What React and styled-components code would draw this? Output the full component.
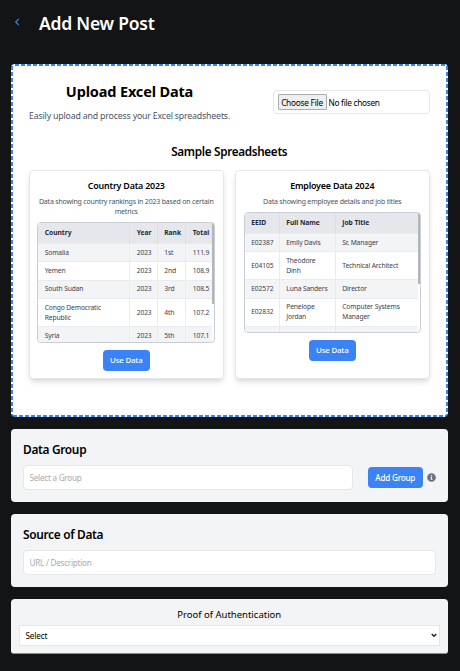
import React from "react";
import styled, { createGlobalStyle } from "styled-components";

const GlobalStyle = createGlobalStyle`
  *, *::before, *::after { box-sizing: border-box; }
  body { margin: 0; background: #131416; font-family: "Noto Sans", "Open Sans", sans-serif; color: #000; overflow: hidden; }
  h1, h2, h3, p { margin: 0; }
  button, input, select { font-family: inherit; margin: 0; }
`;

const Page = styled.main`
  height: 671px;
  padding: 0 12.5px 0 11px;
  background: #131416;
`;

const Header = styled.header`
  display: flex;
  align-items: center;
  height: 64px;
  padding: 0 0 18px 3px;
`;

const BackButton = styled.button`
  display: flex;
  width: 25px;
  height: 20px;
  padding: 5px 0 0;
  border: 0;
  background: none;
  color: #4384cf;
`;

const PageTitle = styled.h1`
  font-size: 17.5px;
  line-height: 24px;
  font-weight: 600;
  letter-spacing: -0.23px;
  color: #fff;
  white-space: nowrap;
`;

const dash = "#3b82f6 0 4px, #fff 4px 6px";

const UploadPanel = styled.section`
  height: 353px;
  border-radius: 4px;
  background:
    repeating-linear-gradient(90deg, ${dash}) 4px 0 / 100% 2px no-repeat,
    repeating-linear-gradient(90deg, ${dash}) 2px 100% / 100% 2px no-repeat,
    repeating-linear-gradient(180deg, ${dash}) 0 2px / 2px 100% no-repeat,
    repeating-linear-gradient(180deg, ${dash}) 100% 2px / 2px 100% no-repeat,
    #fff;
  padding: 17px 18px 0;
`;

const UploadTop = styled.div`
  display: flex;
  justify-content: space-between;
  height: 61px;
`;

const Intro = styled.div`
  width: 201px;
  text-align: center;
  white-space: nowrap;
`;

const UploadTitle = styled.h2`
  font-size: 14.5px;
  line-height: 20px;
  font-weight: 700;
  letter-spacing: -0.15px;
`;

const UploadText = styled.p`
  margin-top: 8px;
  font-size: 8.8px;
  line-height: 14px;
  letter-spacing: -0.19px;
  color: #4b5563;
`;

const FileField = styled.div`
  display: flex;
  align-items: center;
  width: 157px;
  height: 24px;
  margin-top: 9px;
  padding-left: 4px;
  border: 1px solid #e5e7eb;
  border-radius: 4px;
  font-size: 8.3px;
  letter-spacing: -0.3px;
  white-space: nowrap;
`;

const FileButton = styled.button`
  width: 49px;
  height: 16px;
  margin-right: 2px;
  padding: 0;
  border: 1px solid #a9adac;
  border-radius: 1px;
  background: #efefef;
  font-size: 8.3px;
  line-height: 13px;
  letter-spacing: -0.25px;
  color: #000;
`;

const SampleTitle = styled.h3`
  font-size: 11.7px;
  line-height: 18px;
  font-weight: 600;
  letter-spacing: -0.31px;
  text-align: center;
`;

const Cards = styled.div`
  display: grid;
  grid-template-columns: minmax(0, 1fr) minmax(0, 1fr);
  gap: 11.5px;
  height: 209px;
  margin-top: 10px;
`;

const Card = styled.article`
  display: flex;
  flex-direction: column;
  align-items: center;
  padding: 8px 7px 0;
  border: 1px solid #e5e7eb;
  border-radius: 4px;
  background: #fff;
  box-shadow: 0 4px 6px -1px rgba(0, 0, 0, 0.12), 0 2px 4px -2px rgba(0, 0, 0, 0.1);
`;

const CardTitle = styled.h3`
  font-size: 8.9px;
  line-height: 13px;
  font-weight: 600;
  letter-spacing: -0.19px;
`;

const CardText = styled.p`
  margin: 5px 0;
  font-size: 7px;
  line-height: 10px;
  letter-spacing: -0.19px;
  color: #4b5563;
  text-align: center;
`;

const TableFrame = styled.div`
  display: flex;
  align-items: flex-start;
  flex: none;
  width: ${(p) => p.$width}px;
  height: 121px;
  overflow: hidden;
  border: 1px solid #c9cdd5;
  border-radius: 4px;
`;

const Table = styled.table`
  flex: 1;
  width: 100%;
  min-width: 0;
  table-layout: fixed;
  border-collapse: collapse;
  font-size: 6.7px;
  line-height: 10px;
  letter-spacing: -0.12px;
  color: #374151;
`;

const Row = styled.tr`
  height: ${(p) => p.$h}px;
  background: ${(p) => (p.$shaded ? "#f3f4f6" : "#fff")};
`;

const HeadCell = styled.th`
  width: ${(p) => p.$w}px;
  padding: 0 6px 0 6.5px;
  background: #e5e7eb;
  border-right: 1px solid #dcdfe4;
  font-weight: 700;
  text-align: left;
  color: #1f2937;
  letter-spacing: -0.02px;
  white-space: nowrap;
  &:last-child { border-right: 0; }
`;

const Cell = styled.td`
  padding: 0 5px 0 6.5px;
  border: 1px solid #e9ebee;
  border-left: 0;
  &:last-child { border-right: 0; }
`;

const ScrollThumb = styled.div`
  flex: none;
  width: 2px;
  height: ${(p) => p.$h}px;
  background: #b3b5b9;
`;

const PrimaryButton = styled.button`
  flex: none;
  width: ${(p) => p.$w || 47.5}px;
  height: 20.5px;
  margin-top: ${(p) => p.$top || 0}px;
  padding: 0;
  border: 0;
  border-radius: 4px;
  background: #3b82f6;
  color: #fff;
  font-size: ${(p) => p.$size || 7.9}px;
  font-weight: 500;
  letter-spacing: -0.2px;
  white-space: nowrap;
`;

const FormPanel = styled.section`
  height: 73px;
  margin-top: 12px;
  padding: 11px 12px 0;
  border-radius: 4px;
  background: #f3f4f6;
`;

const PanelTitle = styled.h2`
  font-size: 11.9px;
  line-height: 18px;
  font-weight: 600;
  letter-spacing: -0.32px;
`;

const FieldRow = styled.div`
  display: flex;
  align-items: center;
  margin-top: 7px;
`;

const TextField = styled.input`
  flex: 1;
  min-width: 0;
  height: 25px;
  padding: 0 5.5px;
  border: 1px solid #e5e7eb;
  border-radius: 4px;
  background: #fff;
  font-size: 8.1px;
  letter-spacing: -0.23px;
  &::placeholder { color: ${(p) => p.$tone}; opacity: 1; }
`;

const GroupActions = styled.div`
  display: flex;
  align-items: center;
  gap: 3.5px;
  margin: 0 0 0 15px;
`;

const ProofPanel = styled.section`
  height: 55px;
  margin-top: 12px;
  padding: 8px 8px 0;
  border-radius: 4px 4px 3px 3px;
  background: #f3f4f6;
  border-bottom: 1px solid #8b8d91;
  text-align: center;
`;

const ProofLabel = styled.label`
  display: block;
  font-size: 9.5px;
  line-height: 15px;
  letter-spacing: 0;
`;

const SelectBox = styled.button`
  display: flex;
  align-items: center;
  justify-content: space-between;
  width: 100%;
  height: 21px;
  margin-top: 3px;
  padding: 0 1.5px 0 5.5px;
  border: 1px solid #e5e7eb;
  background: #fff;
  font-size: 8.2px;
  letter-spacing: -0.15px;
  color: #000;
`;

const samples = [
  {
    title: "Country Data 2023",
    text: "Data showing country rankings in 2023 based on certain metrics",
    width: 178,
    thumb: 81,
    cols: [["Country", 91.5], ["Year", 27.5], ["Rank", 28.5], ["Total", 26.5]],
    rows: [
      [18, "Somalia", "2023", "1st", "111.9"],
      [18.5, "Yemen", "2023", "2nd", "108.9"],
      [18.5, "South Sudan", "2023", "3rd", "108.5"],
      [28, "Congo Democratic Republic", "2023", "4th", "107.2"],
      [18.5, "Syria", "2023", "5th", "107.1"],
    ],
  },
  {
    title: "Employee Data 2024",
    text: "Data showing employee details and job titles",
    width: 177,
    thumb: 71,
    cols: [["EEID", 34.5], ["Full Name", 56], ["Job Title", 82.5]],
    rows: [
      [18, "E02387", "Emily Davis", "Sr. Manager"],
      [28, "E04105", "Theodore Dinh", "Technical Architect"],
      [18.5, "E02572", "Luna Sanders", "Director"],
      [28, "E02832", "Penelope Jordan", "Computer Systems Manager"],
      [18.5, "", "", ""],
    ],
  },
];

function SampleCard({ sample }) {
  return (
    <Card>
      <CardTitle>{sample.title}</CardTitle>
      <CardText>{sample.text}</CardText>
      <TableFrame $width={sample.width}>
        <Table>
          <thead>
            <Row $h={20.5}>
              {sample.cols.map(([name, w]) => (
                <HeadCell key={name} $w={w}>{name}</HeadCell>
              ))}
            </Row>
          </thead>
          <tbody>
            {sample.rows.map(([h, ...cells], i) => (
              <Row key={i} $h={h} $shaded={i % 2 === 0}>
                {cells.map((c, j) => <Cell key={j}>{c}</Cell>)}
              </Row>
            ))}
          </tbody>
        </Table>
        <ScrollThumb $h={sample.thumb} />
      </TableFrame>
      <PrimaryButton $top={7}>Use Data</PrimaryButton>
    </Card>
  );
}

export default function App() {
  return (
    <>
      <GlobalStyle />
      <Page>
        <Header>
          <BackButton aria-label="Back">
            <svg width="6" height="8" viewBox="0 0 6 8" fill="none" stroke="currentColor" strokeWidth="1.2">
              <path d="M4.8 0.8 1.7 4l3.1 3.2" />
            </svg>
          </BackButton>
          <PageTitle>Add New Post</PageTitle>
        </Header>
        <UploadPanel>
          <UploadTop>
            <Intro>
              <UploadTitle>Upload Excel Data</UploadTitle>
              <UploadText>Easily upload and process your Excel spreadsheets.</UploadText>
            </Intro>
            <FileField>
              <FileButton>Choose File</FileButton>
              No file chosen
            </FileField>
          </UploadTop>
          <SampleTitle>Sample Spreadsheets</SampleTitle>
          <Cards>
            {samples.map((s) => <SampleCard key={s.title} sample={s} />)}
          </Cards>
        </UploadPanel>
        <FormPanel>
          <PanelTitle>Data Group</PanelTitle>
          <FieldRow>
            <TextField placeholder="Select a Group" $tone="#aaaaaa" />
            <GroupActions>
              <PrimaryButton $w={55.5} $size={8.1}>Add Group</PrimaryButton>
              <svg width="9" height="9" viewBox="0 0 512 512" fill="#6b7280">
                <path d="M256 8a248 248 0 1 0 0 496 248 248 0 0 0 0-496zm0 110a42 42 0 1 1 0 84 42 42 0 0 1 0-84zm56 254c0 7-5 12-12 12h-88c-7 0-12-5-12-12v-24c0-7 5-12 12-12h12v-64h-12c-7 0-12-5-12-12v-24c0-7 5-12 12-12h64c7 0 12 5 12 12v100h12c7 0 12 5 12 12v24z" />
              </svg>
            </GroupActions>
          </FieldRow>
        </FormPanel>
        <FormPanel>
          <PanelTitle>Source of Data</PanelTitle>
          <FieldRow>
            <TextField placeholder="URL / Description" $tone="#a3abb9" />
          </FieldRow>
        </FormPanel>
        <ProofPanel>
          <ProofLabel>Proof of Authentication</ProofLabel>
          <SelectBox>
            Select
            <svg width="6" height="5" viewBox="0 0 6 5" fill="none" stroke="#222" strokeWidth="1.4">
              <path d="M0.7 1 3 3.3 5.3 1" />
            </svg>
          </SelectBox>
        </ProofPanel>
      </Page>
    </>
  );
}
